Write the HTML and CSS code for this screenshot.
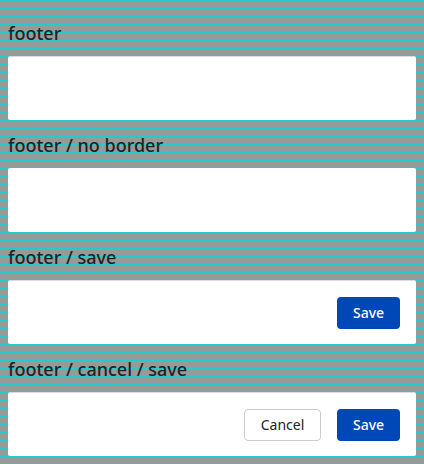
FILE: index.html
```html
<!DOCTYPE html>
<html>
<head>
<meta charset="utf-8">
<link rel="stylesheet" href="styles.css">
</head>
<body>
  <section class="story">
    <h2 class="story-title">footer</h2>
    <div class="footer footer--border"></div>
  </section>
  <section class="story">
    <h2 class="story-title">footer / no border</h2>
    <div class="footer"></div>
  </section>
  <section class="story">
    <h2 class="story-title">footer / save</h2>
    <div class="footer footer--border">
      <button class="btn btn--primary">Save</button>
    </div>
  </section>
  <section class="story">
    <h2 class="story-title">footer / cancel / save</h2>
    <div class="footer footer--border">
      <button class="btn btn--secondary">Cancel</button>
      <button class="btn btn--primary">Save</button>
    </div>
  </section>
</body>
</html>
```
FILE: styles.css
```css
html, body {
  margin: 0;
  padding: 0;
}
body {
  padding: 8px;
  background: repeating-linear-gradient(to bottom, #22cccc 0, #22cccc 1px, #999999 1px, #999999 8px);
  font-family: "Noto Sans", "Open Sans", sans-serif;
  min-height: 464px;
  box-sizing: border-box;
}
.story-title {
  margin: 0;
  height: 48px;
  display: flex;
  align-items: center;
  font-size: 18px;
  font-weight: 500;
  color: #222222;
  padding-top: 1px;
  box-sizing: border-box;
}
.footer {
  height: 64px;
  background: #ffffff;
  border-radius: 2px;
  display: flex;
  align-items: center;
  justify-content: flex-end;
  gap: 16px;
  padding: 0 16px;
  box-sizing: border-box;
}
.footer--border {
  border-top: 1px solid #dddddd;
}
.btn {
  height: 32px;
  border-radius: 4px;
  font-family: "Noto Sans", "Open Sans", sans-serif;
  font-size: 14px;
  padding: 0;
  box-sizing: border-box;
  cursor: pointer;
}
.btn--primary {
  width: 63px;
  background: #0048b8;
  color: #ffffff;
  border: none;
  font-weight: 500;
}
.btn--secondary {
  width: 77px;
  background: #ffffff;
  color: #222222;
  border: 1px solid #cccccc;
  font-weight: 400;
}
```
